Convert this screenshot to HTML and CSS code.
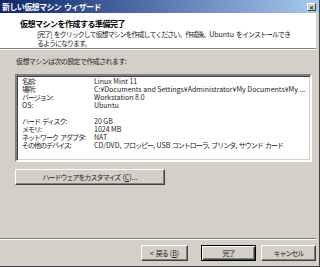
FILE: index.html
```html
<!DOCTYPE html>
<html lang="ja">
<head>
    <meta charset="UTF-8">
    <title>新しい仮想マシン ウィザード</title>
    <link rel="stylesheet" href="styles.css">
</head>
<body>
    <div class="window">
        <div class="titlebar">
            <span class="title">新しい仮想マシン ウィザード</span>
            <span class="close-btn">&#x2715;</span>
        </div>
        <div class="header">
            <h1>仮想マシンを作成する準備完了</h1>
            <p class="desc">[完了] をクリックして仮想マシンを作成してください。作成後、<span class="en">Ubuntu</span> をインストールでき<br>るようになります。</p>
        </div>
        <div class="sep"></div>
        <div class="content">
            <p class="intro">仮想マシンは次の設定で作成されます:</p>
            <div class="listbox">
                <div class="row"><span class="key">名前:</span><span class="val">Linux Mint 11</span></div>
                <div class="row"><span class="key">場所:</span><span class="val">C:¥Documents and Settings¥Administrator¥My Documents¥My ...</span></div>
                <div class="row"><span class="key">バージョン:</span><span class="val">Workstation 8.0</span></div>
                <div class="row"><span class="key"><span class="en">OS:</span></span><span class="val">Ubuntu</span></div>
                <div class="row"></div>
                <div class="row"><span class="key">ハード ディスク:</span><span class="val">20 GB</span></div>
                <div class="row"><span class="key">メモリ:</span><span class="val">1024 MB</span></div>
                <div class="row"><span class="key">ネットワーク アダプタ:</span><span class="val">NAT</span></div>
                <div class="row"><span class="key">その他のデバイス:</span><span class="val">CD/DVD, <span class="jp">フロッピー</span>, USB <span class="jp">コントローラ</span>, <span class="jp">プリンタ</span>, <span class="jp">サウンド カード</span></span></div>
            </div>
            <button class="btn btn-custom">ハードウェアをカスタマイズ <span class="en">(<u>C</u>)...</span></button>
        </div>
        <div class="sep"></div>
        <div class="footer">
            <button class="btn btn-back"><span class="en">&lt;</span> 戻る <span class="en">(<u>B</u>)</span></button>
            <button class="btn btn-finish">完了</button>
            <button class="btn btn-cancel">キャンセル</button>
        </div>
    </div>
</body>
</html>
```

FILE: styles.css
```css
* {
    margin: 0;
    padding: 0;
    box-sizing: border-box;
}

body {
    font-family: "Noto Sans CJK JP", "DejaVu Sans", sans-serif;
    font-size: 7px;
    letter-spacing: -1px;
    word-spacing: 1.5px;
    color: #000;
    background: #d4d0c8;
}

.en {
    letter-spacing: 0;
}

.window {
    width: 320px;
    height: 267px;
    display: flex;
    flex-direction: column;
    background: #d4d0c8;
    padding: 0 3px 2px 0;
    border-right: 1px solid #404040;
    border-bottom: 1px solid #404040;
}

/* Title bar */
.titlebar {
    height: 13px;
    margin-right: -3px;
    display: flex;
    align-items: center;
    justify-content: space-between;
    padding: 0 3px 0 2px;
    background: linear-gradient(to right, #0a246a, #a6caf0);
}

.title {
    color: #fff;
    font-weight: bold;
    font-size: 8px;
    letter-spacing: -0.6px;
    line-height: 13px;
}

.close-btn {
    width: 9px;
    height: 8px;
    font-size: 6px;
    letter-spacing: 0;
    line-height: 7px;
    text-align: center;
    color: #000;
    background: #d4d0c8;
    border: 1px solid;
    border-color: #fff #404040 #404040 #fff;
}

/* Header */
.header {
    height: 35px;
    background: #fff;
    padding: 5px 0 0 20px;
}

h1 {
    font-size: 8px;
    font-weight: bold;
    letter-spacing: -0.5px;
    line-height: 11px;
}

.desc {
    margin: 1px 0 0 17px;
    line-height: 9px;
    color: #222;
    white-space: nowrap;
}

.sep {
    height: 2px;
    border-top: 1px solid #808080;
    border-bottom: 1px solid #fff;
}

/* Content */
.content {
    flex: 1;
    padding: 7px 0 0 15px;
}

.intro {
    margin-left: 1px;
    line-height: 8px;
    letter-spacing: -0.6px;
    color: #222;
}

.listbox {
    width: 297px;
    height: 88px;
    margin-top: 9px;
    padding: 1px 0 0 5px;
    background: #fff;
    border: 2px solid;
    border-color: #808080 #fff #fff #808080;
    box-shadow: inset 1px 1px 0 #404040, inset -1px -1px 0 #d4d0c8;
    color: #222;
}

.row {
    display: flex;
    height: 8px;
    line-height: 8px;
    white-space: nowrap;
}

.key {
    width: 72px;
}

.val {
    letter-spacing: 0;
    word-spacing: 0;
}

.val .jp {
    letter-spacing: -1px;
    word-spacing: 1.5px;
}

.btn {
    font-family: inherit;
    font-size: 7px;
    letter-spacing: -1px;
    word-spacing: 1.5px;
    color: #222;
    height: 16px;
    background: #d4d0c8;
    border: 1px solid;
    border-color: #fff #404040 #404040 #fff;
    box-shadow: inset -1px -1px 0 #808080;
}

.btn-custom {
    width: 150px;
    margin-top: 7px;
}

/* Footer */
.footer {
    height: 24px;
    display: flex;
    justify-content: flex-end;
    align-items: flex-start;
    padding-top: 5px;
}

.btn-back {
    width: 47px;
}

.btn-finish {
    width: 55px;
    margin-left: 13px;
    border: 1px solid #000;
    box-shadow: inset 1px 1px 0 #fff, inset -1px -1px 0 #404040, inset -2px -2px 0 #808080;
}

.btn-cancel {
    width: 55px;
    margin-left: 5px;
}
```
